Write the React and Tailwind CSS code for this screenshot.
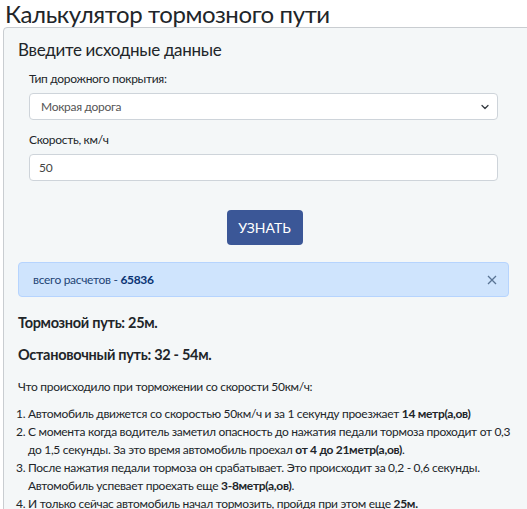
import React from 'react';

const font = { fontFamily: 'Lato, "Noto Sans", sans-serif' };

export default function App() {
  return (
    <div className="w-[527px] h-[509px] overflow-hidden bg-white text-[#212529] tracking-[-0.3px]" style={font}>
      <h1 className="pl-[5px] text-[24px] leading-[27px] font-normal tracking-[-0.4px]">Калькулятор тормозного пути</h1>

      {/* --- CARD --- */}
      <div className="ml-[3px] w-[540px] border border-[#c9cdd1] rounded-tl-[4px] bg-[#f4f7f8] pt-[9px] pl-[14px] pr-[33px]">
        <h2 className="text-[17px] leading-[26px] font-normal">Введите исходные данные</h2>

        <div className="px-[11px] mt-[8px]">
          <label className="block text-[12px] leading-[16px]">Тип дорожного покрытия:</label>
          <div className="relative mt-[6px] h-[27px] bg-white border border-[#ced4da] rounded-[4px] flex items-center pl-[11px] text-[12px] text-[#555]">
            Мокрая дорога
            <svg className="absolute right-[7px] top-[9px]" width="10" height="8" viewBox="0 0 16 16">
              <path d="M2 5l6 6 6-6" fill="none" stroke="#343a40" strokeWidth="2.5" strokeLinecap="round" strokeLinejoin="round" />
            </svg>
          </div>

          <label className="block mt-[12px] text-[12px] leading-[16px]">Скорость, км/ч</label>
          <div className="mt-[6px] h-[27px] bg-white border border-[#ced4da] rounded-[4px] flex items-center pl-[9px] text-[12px] text-[#444]">
            50
          </div>
        </div>

        <div className="flex justify-center mt-[29px]">
          <button className="w-[76px] h-[35px] rounded-[4px] bg-[#3b5797] text-white text-[14px] tracking-normal ml-[2px]">УЗНАТЬ</button>
        </div>

        {/* --- ALERT --- */}
        <div className="mt-[17px] h-[35px] flex items-center justify-between bg-[#cfe4fd] border border-[#b6d4fe] rounded-[4px] pl-[14px] pr-[11px] text-[12px] text-[#1e4475]">
          <span>
            всего расчетов - <b className="font-bold text-[#0a3374]">65836</b>
          </span>
          <svg width="10" height="10" viewBox="0 0 10 10">
            <path d="M1 1l8 8M9 1l-8 8" stroke="#5a7494" strokeWidth="1.3" />
          </svg>
        </div>

        <p className="mt-[16px] text-[14.5px] leading-[20px] font-bold">Тормозной путь: 25м.</p>
        <p className="mt-[12px] text-[14.5px] leading-[20px] font-bold">Остановочный путь: 32 - 54м.</p>

        <p className="mt-[13px] text-[12px] leading-[18px]">Что происходило при торможении со скорости 50км/ч:</p>

        <ol className="mt-[9px] mr-[-12px] text-[12px] leading-[18px] list-decimal pl-[10px]">
          <li>Автомобиль движется со скоростью 50км/ч и за 1 секунду проезжает <b>14 метр(а,ов)</b></li>
          <li>С момента когда водитель заметил опасность до нажатия педали тормоза проходит от 0,3 до 1,5 секунды. За это время автомобиль проехал <b>от 4 до 21метр(а,ов)</b>.</li>
          <li>После нажатия педали тормоза он срабатывает. Это происходит за 0,2 - 0,6 секунды. Автомобиль успевает проехать еще <b>3-8метр(а,ов)</b>.</li>
          <li>И только сейчас автомобиль начал тормозить, пройдя при этом еще <b>25м.</b></li>
        </ol>
      </div>
    </div>
  );
}
